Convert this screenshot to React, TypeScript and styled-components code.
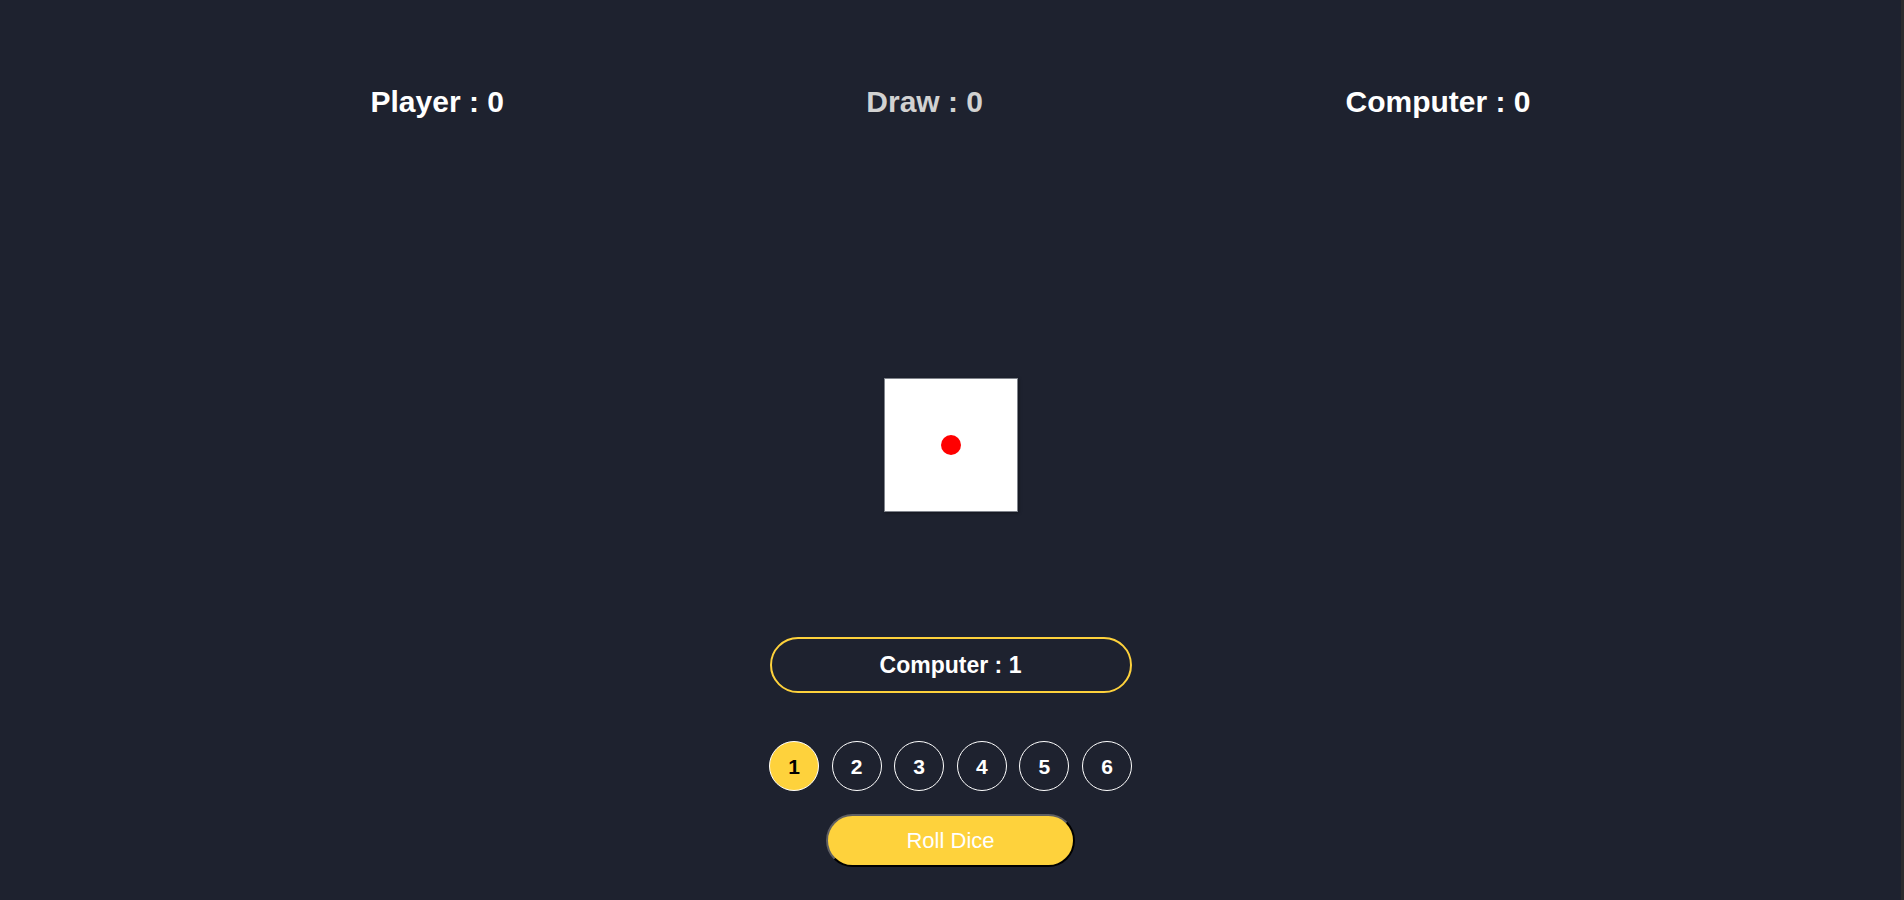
import React, { useState } from "react";
import styled, { createGlobalStyle } from "styled-components";

const YELLOW = "#fed23c";

const GlobalStyle = createGlobalStyle`
  html, body {
    margin: 0;
    padding: 0;
    background: #1e222f;
  }
  body {
    font-family: "Liberation Sans", Arial, sans-serif;
  }
`;

const Page = styled.main`
  box-sizing: border-box;
  width: 100%;
  min-height: 900px;
  background: #1e222f;
  border-right: 3px solid #2c2c2e;
  display: flex;
  flex-direction: column;
  align-items: center;
  overflow: hidden;
`;

const ScoreBar = styled.header`
  width: 1160px;
  margin-top: 85px;
  display: flex;
  justify-content: space-between;
  align-items: center;
`;

const Score = styled.h2<{ $muted?: boolean }>`
  margin: 0;
  font-size: 30px;
  line-height: 34px;
  font-weight: 700;
  color: ${(p) => (p.$muted ? "#d2d2d2" : "#ffffff")};
`;

const Dice = styled.div`
  box-sizing: border-box;
  margin-top: 259px;
  width: 134px;
  height: 134px;
  background: #ffffff;
  border: 1px solid #80848c;
  box-shadow: 1px 1px 3px rgba(0, 0, 0, 0.35);
  display: flex;
  align-items: center;
  justify-content: center;
`;

const Pip = styled.span`
  width: 20px;
  height: 20px;
  border-radius: 50%;
  background: #ff0000;
`;

const Result = styled.div`
  box-sizing: border-box;
  margin-top: 125px;
  width: 362px;
  height: 56px;
  border: 2px solid ${YELLOW};
  border-radius: 28px;
  display: flex;
  align-items: center;
  justify-content: center;
  color: #ffffff;
  font-size: 23px;
  font-weight: 700;
`;

const Choices = styled.div`
  margin-top: 48px;
  width: 363px;
  display: flex;
  justify-content: space-between;
`;

const Choice = styled.button<{ $active?: boolean }>`
  box-sizing: border-box;
  width: 50px;
  height: 50px;
  padding: 0;
  border-radius: 50%;
  border: 1px solid #ffffff;
  background: ${(p) => (p.$active ? YELLOW : "transparent")};
  color: ${(p) => (p.$active ? "#000000" : "#ffffff")};
  font-family: "Liberation Sans", Arial, sans-serif;
  font-size: 21px;
  line-height: 1;
  font-weight: 700;
  cursor: pointer;
  display: flex;
  align-items: center;
  justify-content: center;
`;

const RollButton = styled.button`
  box-sizing: border-box;
  margin-top: 23px;
  width: 249px;
  height: 53px;
  border-radius: 27px;
  background: ${YELLOW};
  color: #ffffff;
  font-family: "Liberation Sans", Arial, sans-serif;
  font-size: 22px;
  font-weight: 400;
  border-style: solid;
  border-width: 2px;
  border-color: #5f5f62 #000000 #000000 #5f5f62;
  cursor: pointer;
`;

export default function App() {
  const [selected, setSelected] = useState(1);
  return (
    <>
      <GlobalStyle />
      <Page>
        <ScoreBar>
          <Score>Player : 0</Score>
          <Score $muted>Draw : 0</Score>
          <Score>Computer : 0</Score>
        </ScoreBar>
        <Dice>
          <Pip />
        </Dice>
        <Result>Computer : 1</Result>
        <Choices>
          {[1, 2, 3, 4, 5, 6].map((n) => (
            <Choice key={n} $active={n === selected} onClick={() => setSelected(n)}>
              {n}
            </Choice>
          ))}
        </Choices>
        <RollButton>Roll Dice</RollButton>
      </Page>
    </>
  );
}
